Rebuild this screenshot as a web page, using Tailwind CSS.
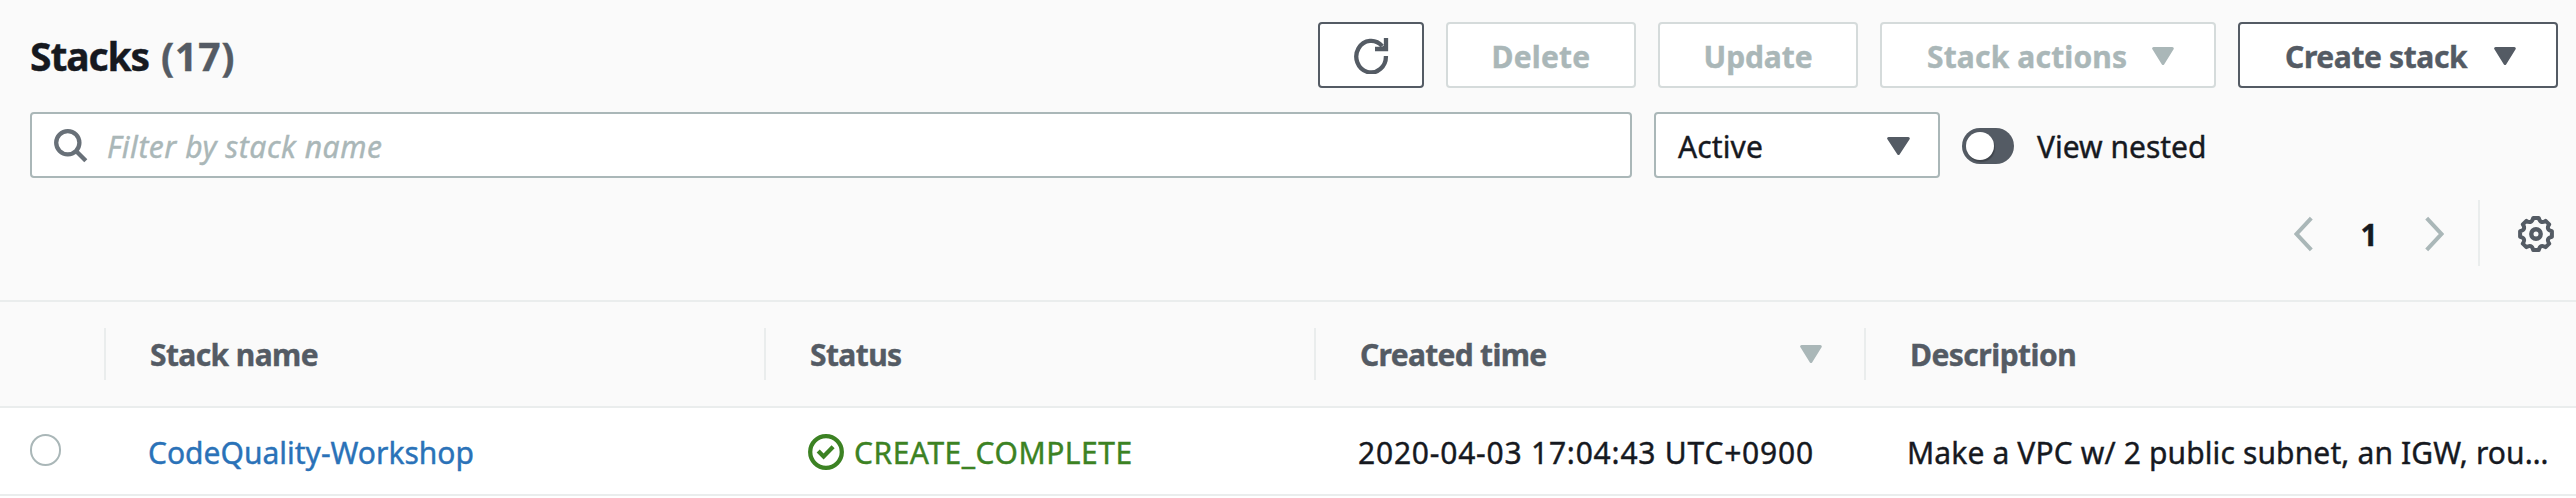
<!DOCTYPE html>
<html lang="en">
<head>
<meta charset="utf-8">
<title>Stacks</title>
<script src="https://cdn.jsdelivr.net/npm/@tailwindcss/browser@4"></script>
</head>
<body class="bg-white font-['Noto_Sans','Open_Sans',sans-serif] text-[30px] leading-[40px] text-[#16191f] whitespace-nowrap [-webkit-text-stroke:0.4px_currentColor]">
<div class="flex h-[498px] w-[2576px] flex-col overflow-hidden">

  <header class="flex h-[300px] shrink-0 flex-col bg-[#fafafa] pt-[22px]">
    <!-- Title and actions -->
    <div class="flex h-[66px] items-center pr-[18px] pl-[30px]">
      <h1 class="flex pt-[1px] text-[39px] leading-[66px] font-bold"><span class="w-[131px] tracking-[-1.1px]">Stacks</span><span class="tracking-[0.8px] text-[#545b64]">(17)</span></h1>
      <div class="ml-auto flex gap-[22px] font-bold">
        <button class="flex h-[66px] w-[106px] items-center justify-center rounded-[4px] border-2 border-[#545b64] bg-white pt-[2px] pl-[2px]" aria-label="Refresh">
          <svg class="h-9 w-9 text-[#545b64]" viewBox="0 0 36 36" fill="none" stroke="currentColor" stroke-width="4.3"><path d="M31.9 18A14.8 15.8 0 1 1 28.2 8.2"/><path d="M32 0v11H21"/><path d="M25 11l7-5v5z" fill="currentColor" stroke="none"/></svg>
        </button>
        <button class="flex h-[66px] w-[190px] items-center justify-center rounded-[4px] border-2 border-[#d5dbdb] bg-white pt-[4px] tracking-[0.2px] text-[#aab7b8]">Delete</button>
        <button class="flex h-[66px] w-[200px] items-center justify-center rounded-[4px] border-2 border-[#d5dbdb] bg-white pt-[4px] tracking-[-0.1px] text-[#aab7b8]">Update</button>
        <button class="flex h-[66px] w-[336px] items-center justify-between rounded-[4px] border-2 border-[#d5dbdb] bg-white pt-[2px] pr-[40px] pl-[45px] tracking-[0.16px] text-[#aab7b8]">
          <span class="pt-[2px]">Stack actions</span>
          <svg class="h-[18px] w-[22px]" viewBox="0 0 22 18" fill="currentColor" stroke="currentColor" stroke-width="3" stroke-linejoin="round"><path d="M1.7 1.5h18.6L11 16.5z"/></svg>
        </button>
        <button class="flex h-[66px] w-[320px] items-center justify-between rounded-[4px] border-2 border-[#545b64] bg-white pt-[2px] pr-[40px] pl-[45px] tracking-[-0.38px] text-[#545b64]">
          <span class="pt-[2px]">Create stack</span>
          <svg class="h-[18px] w-[22px]" viewBox="0 0 22 18" fill="currentColor" stroke="currentColor" stroke-width="3" stroke-linejoin="round"><path d="M1.7 1.5h18.6L11 16.5z"/></svg>
        </button>
      </div>
    </div>

    <!-- Filters -->
    <div class="mt-[24px] flex h-[66px] items-center pl-[30px]">
      <div class="flex h-[66px] w-[1602px] items-center rounded-[4px] border-2 border-[#aab7b8] bg-white pt-[2px] pl-[22px]">
        <svg class="h-[34px] w-[34px] text-[#687078]" viewBox="0 0 34 34" fill="none" stroke="currentColor" stroke-width="4.3"><circle cx="13.8" cy="13.8" r="11.6"/><path d="M21.8 21.8L31.8 31.8"/></svg>
        <span class="pt-[2px] pl-[19px] tracking-[0.53px] text-[#aab7b8] italic">Filter by stack name</span>
      </div>
      <div class="ml-[22px] flex h-[66px] w-[286px] items-center justify-between rounded-[4px] border-2 border-[#aab7b8] bg-white pt-[2px] pr-[28px] pl-[22px]">
        <span class="pt-[2px] tracking-[0.1px]">Active</span>
        <svg class="h-[18px] w-[23px] text-[#545b64]" viewBox="0 0 23 18" fill="currentColor" stroke="currentColor" stroke-width="3" stroke-linejoin="round"><path d="M1.7 1.5h19.6L11.5 16.5z"/></svg>
      </div>
      <div class="ml-[22px] flex items-center pt-[2px]">
        <div class="flex h-9 w-[52px] items-center rounded-full bg-[#545b64] pl-[4px]"><span class="h-7 w-7 rounded-full bg-white shadow-[1px_2px_1px_rgba(0,0,0,0.25)]"></span></div>
        <span class="pt-[2px] pl-[23px]">View nested</span>
      </div>
    </div>

    <!-- Pagination -->
    <div class="mt-[22px] flex h-[66px] items-center justify-end pr-[22px]">
      <div class="flex items-center pt-[2px]">
        <svg class="h-9 w-[19px] text-[#aab7b8]" viewBox="0 0 19 36" fill="none" stroke="currentColor" stroke-width="4"><path d="M17.3 2.2L2.6 18l14.7 15.8"/></svg>
        <span class="w-[112px] pt-[2px] text-center font-bold">1</span>
        <svg class="h-9 w-[19px] text-[#aab7b8]" viewBox="0 0 19 36" fill="none" stroke="currentColor" stroke-width="4"><path d="M1.7 2.2L16.4 18 1.7 33.8"/></svg>
      </div>
      <span class="ml-[34px] h-[66px] w-[2px] bg-[#eaeded]"></span>
      <svg class="mt-[2px] ml-[38px] h-9 w-9 overflow-visible text-[#545b64]" viewBox="-18 -18 36 36" fill="none" stroke="currentColor" stroke-width="4" stroke-linejoin="round"><path d="M-2.8 -15.9H2.8Q4.4 -9.6 9.6 -13.2L13.2 -9.6Q9.6 -4.4 15.9 -2.8V2.8Q9.6 4.4 13.2 9.6L9.6 13.2Q4.4 9.6 2.8 15.9H-2.8Q-4.4 9.6 -9.6 13.2L-13.2 9.6Q-9.6 4.4 -15.9 2.8V-2.8Q-9.6 -4.4 -13.2 -9.6L-9.6 -13.2Q-4.4 -9.6 -2.8 -15.9z"/><circle r="4.7" stroke-width="4.4"/></svg>
    </div>
  </header>

  <!-- Column headings -->
  <div class="grid h-[108px] shrink-0 grid-cols-[106px_660px_550px_550px_710px] items-center border-y-2 border-[#eaeded] bg-[#fafafa] font-bold text-[#545b64]">
    <div class="h-[52px] border-r-2 border-[#eaeded]"></div>
    <div class="h-[52px] border-r-2 border-[#eaeded] pl-[44px] leading-[54px] tracking-[-0.6px]">Stack name</div>
    <div class="h-[52px] border-r-2 border-[#eaeded] pl-[44px] leading-[54px] tracking-[-0.6px]">Status</div>
    <div class="flex h-[52px] items-center justify-between border-r-2 border-[#eaeded] pr-[42px] pl-[44px] tracking-[-0.69px]"><span class="pt-[2px]">Created time</span>
      <svg class="h-[18px] w-[22px] text-[#aab7b8]" viewBox="0 0 22 18" fill="currentColor" stroke="currentColor" stroke-width="3" stroke-linejoin="round"><path d="M1.7 1.5h18.6L11 16.5z"/></svg>
    </div>
    <div class="h-[52px] pl-[44px] leading-[54px] tracking-[-0.52px]">Description</div>
  </div>

  <!-- Stack row -->
  <div class="grid h-[88px] shrink-0 grid-cols-[106px_660px_550px_550px_710px] items-center border-b-2 border-[#eaeded]">
    <div class="pb-[2px] pl-[30px]"><span class="block h-8 w-[31px] rounded-full border-2 border-[#aab7b8] bg-white"></span></div>
    <div class="pt-[4px] pl-[42px] text-[#2a72b8]">CodeQuality-Workshop</div>
    <div class="flex items-center pt-[2px] pl-[42px] tracking-[0.51px] text-[#3c8223]">
      <svg class="h-9 w-9" viewBox="0 0 36 36" fill="none" stroke="currentColor" stroke-width="4.3"><circle cx="18" cy="18" r="15.8"/><path d="M10.2 16.9l5.4 5.5 9.5-9.6"/></svg>
      <span class="pt-[2px] pl-[10px]">CREATE_COMPLETE</span>
    </div>
    <div class="pt-[4px] pl-[42px] tracking-[0.78px]">2020-04-03 17:04:43 UTC+0900</div>
    <div class="pt-[4px] pl-[41px] tracking-[0.13px]">Make a VPC w/ 2 public subnet, an IGW, rou…</div>
  </div>
</div>
</body>
</html>
